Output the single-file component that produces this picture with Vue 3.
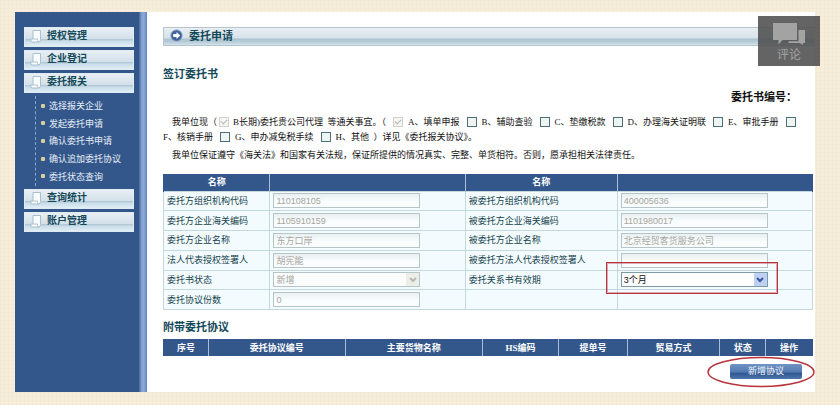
<script setup>
import { ref } from 'vue'

const menu = [
  { title: '授权管理', items: [] },
  { title: '企业登记', items: [] },
  { title: '委托报关', items: ['选择报关企业', '发起委托申请', '确认委托书申请', '确认追加委托协议', '委托状态查询'] },
  { title: '查询统计', items: [] },
  { title: '账户管理', items: [] },
]

const rows = [
  [
    { id: 'org-a', label: '委托方组织机构代码', value: '110108105' },
    { id: 'org-b', label: '被委托方组织机构代码', value: '400005636' },
  ],
  [
    { id: 'customs-a', label: '委托方企业海关编码', value: '1105910159' },
    { id: 'customs-b', label: '被委托方企业海关编码', value: '1101980017' },
  ],
  [
    { id: 'name-a', label: '委托方企业名称', value: '东方口岸' },
    { id: 'name-b', label: '被委托方企业名称', value: '北京经贸客货服务公司' },
  ],
  [
    { id: 'signer-a', label: '法人代表授权签署人', value: '胡宪能' },
    { id: 'signer-b', label: '被委托方法人代表授权签署人', value: '' },
  ],
  [
    { id: 'status', label: '委托书状态', value: '新增', select: true },
    { id: 'period', label: '委托关系书有效期', value: '3个月', select: true, active: true },
  ],
  [{ id: 'count', label: '委托协议份数', value: '0' }, null],
]

const columns = ['序号', '委托协议编号', '主要货物名称', 'HS编码', '提单号', '贸易方式', '状态', '操作']

const scopeTop = ref([
  { key: 'A', text: 'A、填单申报', checked: true, disabled: true },
  { key: 'B', text: 'B、辅助查验', checked: false },
  { key: 'C', text: 'C、垫缴税款', checked: false },
  { key: 'D', text: 'D、办理海关证明联', checked: false },
  { key: 'E', text: 'E、审批手册', checked: false },
])
const manual = ref(false)
const taxCut = ref(false)
const other = ref(false)
</script>

<template>
  <div class="page">
    <div class="panel">
      <nav class="side">
        <template v-for="group in menu" :key="group.title">
          <a class="group" href="#">
            <svg class="sheet" viewBox="0 0 12 13">
              <path d="M3 .5h7.500v9q0 2.500-2 2.500H2.500Q.8 12 .8 10V9H3z" fill="#f8fbfc" stroke="#a3bac8" stroke-width=".9" />
              <path d="M3 9h4.500v1.500q0 1.500 1.500 1.500" fill="none" stroke="#a3bac8" stroke-width=".8" />
            </svg>
            <span>{{ group.title }}</span>
          </a>
          <ul v-if="group.items.length" class="sub">
            <li v-for="item in group.items" :key="item"><a href="#">{{ item }}</a></li>
          </ul>
        </template>
      </nav>
      <div class="rail"></div>

      <main class="main">
        <div class="bar">
          <svg class="go" viewBox="0 0 14 14">
            <circle cx="7" cy="7" r="6" fill="#41659b" />
            <circle cx="7" cy="7" r="6" fill="none" stroke="#7d98bf" />
            <path d="M3.500 5.500H7V3.200L11 7l-4 3.800V8.500H3.500z" fill="#fff" />
          </svg>
          <span>委托申请</span>
        </div>

        <div class="body">
          <h1>签订委托书</h1>
          <p class="number">委托书编号：</p>

          <div class="terms">
            <p>
              <span class="lead">我单位现（</span><label><input class="tight" type="checkbox" checked disabled />B长期)委托贵公司代理</label>&nbsp; 等通关事宜。（<label
                v-for="s in scopeTop" :key="s.key"><input v-model="s.checked" type="checkbox" :disabled="s.disabled" />{{ s.text }}</label><label><input
                v-model="manual" type="checkbox" /><br />F、核销手册</label><label><input v-model="taxCut" type="checkbox" />G、申办减免税手续</label><label><input
                v-model="other" type="checkbox" />H、其他</label>&nbsp; ）详见《委托报关协议》。
            </p>
            <p class="pledge"><span class="lead">我单位保证遵守《海关法》和国家有关法规，保证所提供的情况真实、完整、单货相符。否则，愿承担相关法律责任。</span></p>
          </div>

          <table class="form">
            <thead>
              <tr>
                <th class="w-a">名称</th>
                <th class="w-b"></th>
                <th class="w-c">名称</th>
                <th class="w-d"></th>
              </tr>
            </thead>
            <tbody>
              <tr v-for="(row, i) in rows" :key="i">
                <template v-for="(f, j) in row" :key="j">
                  <td><label v-if="f" :for="f.id">{{ f.label }}</label></td>
                  <td>
                    <div v-if="f && f.select" class="pick" :class="{ active: f.active }">
                      <select :id="f.id" :disabled="!f.active"><option>{{ f.value }}</option></select>
                      <span class="arrow">
                        <svg viewBox="0 0 8 6"><path d="M1 1l3 3 3-3" fill="none" stroke="currentColor" stroke-width="2" /></svg>
                      </span>
                      <span v-if="f.active" class="mark"></span>
                    </div>
                    <input v-else-if="f" :id="f.id" class="text" type="text" :value="f.value" disabled />
                  </td>
                </template>
              </tr>
            </tbody>
          </table>

          <h2>附带委托协议</h2>
          <table class="list">
            <thead>
              <tr><th v-for="(c, i) in columns" :key="c" :class="'c' + i">{{ c }}</th></tr>
            </thead>
          </table>

          <div class="actions">
            <div class="add">
              <button type="button">新增协议</button>
              <svg class="ring" viewBox="0 0 108 32">
                <ellipse cx="54" cy="16" rx="53" ry="14.500" fill="none" stroke="#b8333b" stroke-width="1.400" />
              </svg>
            </div>
          </div>
        </div>
      </main>
    </div>

    <button class="comment" type="button">
      <svg viewBox="0 0 32 22">
        <path d="M0 0h24v17H9.500l-4 4.500V17H0z" fill="#a3a3a3" />
        <path d="M25.500 7H32v13h-2v2l-3-2H15.500v-1.700h10z" fill="#a3a3a3" />
      </svg>
      <span>评论</span>
    </button>
  </div>
</template>

<style>
body {
  margin: 0;
  background-color: #f6edda;
  background-image:
    repeating-linear-gradient(90deg, rgba(226, 212, 182, 0.12) 0 1px, transparent 1px 4px),
    repeating-linear-gradient(0deg, rgba(226, 212, 182, 0.12) 0 1px, transparent 1px 4px);
}
</style>

<style scoped>
* {
  box-sizing: border-box;
}
.page {
  position: relative;
  padding: 12px 25px 13px 15px;
  font-family: "Liberation Serif", "Noto Sans CJK SC", serif;
  font-size: 9px;
  color: #111;
}
.panel {
  display: flex;
  background: #fff;
}
a {
  color: inherit;
  text-decoration: none;
}
h1, h2, p, ul {
  margin: 0;
  padding: 0;
}

.side {
  display: flex;
  flex-direction: column;
  gap: 3px;
  width: 124px;
  padding: 15px 5px 15px 9px;
  background: #34578b;
}
.rail {
  width: 8px;
  background: linear-gradient(90deg, #42659c, #7f9dce 30%, #8ba8d9 60%, #6284bb);
}
.group {
  display: flex;
  align-items: center;
  gap: 5px;
  height: 20px;
  padding: 0 0 2px 5px;
  background: linear-gradient(#e8eff4, #d3e0e9 60%, #afc6d5 62%, #cbdee9 75%, #e0eef5);
  border: 1px solid #dfeaf2;
  color: #14495a;
  font-size: 10px;
  font-weight: bold;
  line-height: 14px;
}
.sheet {
  width: 12px;
  height: 13px;
}
.sub {
  display: flex;
  flex-direction: column;
  height: 90px;
  margin-left: 11px;
  padding: 1px 0;
  border-left: 1px dashed #8ba6cc;
  list-style: none;
  color: #e6eef8;
}
.sub li {
  display: flex;
  flex: 1;
  align-items: center;
  gap: 4px;
  padding-left: 5px;
  white-space: nowrap;
}
.sub li::before {
  content: "";
  width: 4px;
  height: 4px;
  border-radius: 1px;
  background: #d8cd9c;
}

.main {
  flex: 1;
  min-width: 0;
  padding: 15px 0 13px 16px;
}
.bar {
  display: flex;
  align-items: center;
  gap: 6px;
  height: 19px;
  padding: 0 0 2px 6px;
  border: 1px solid #b4c5d1;
  border-right: 0;
  background: linear-gradient(#e9eff3, #d6e1e8 60%, #abc3d0 64%, #b5cbd8 80%, #d3e2ea);
  color: #14495a;
  font-size: 11px;
  font-weight: bold;
  line-height: 14px;
}
.go {
  width: 13px;
  height: 13px;
}
.body {
  padding-right: 2px;
}
h1, h2 {
  color: #14495a;
  font-size: 11px;
  line-height: 16px;
  font-weight: bold;
}
h1 {
  margin-top: 20px;
}
h2 {
  margin-top: 9px;
}
.number {
  margin-top: 7px;
  padding-right: 16px;
  font-size: 11px;
  line-height: 16px;
  font-weight: bold;
  text-align: right;
}
.terms {
  margin-top: 10px;
  line-height: 15px;
}
.lead {
  padding-left: 9px;
}
.pledge {
  margin-top: 3px;
}
.terms input {
  appearance: none;
  width: 10px;
  height: 10px;
  margin: 0 5px 0 7px;
  border: 1px solid #4d7077;
  background: #eef4f1;
  vertical-align: -2px;
}
.terms input.tight {
  margin: 0 4px 0 2px;
}
.terms input:disabled {
  border-color: #cfd2cc;
  background: #f6f6f3;
}
.terms input:checked::after {
  content: "";
  display: block;
  width: 5px;
  height: 3px;
  margin: 1px;
  border: solid #b3b6b0;
  border-width: 0 0 1px 1px;
  transform: rotate(-45deg);
}

table {
  width: 100%;
  border-collapse: collapse;
  table-layout: fixed;
}
th {
  height: 17px;
  padding: 0;
  background: #34578b;
  color: #fff;
  font-weight: bold;
  line-height: 12px;
}
.form {
  height: 136px;
  margin-top: 11px;
  color: #14434d;
}
.form th, .list th {
  border: solid #a9bdd4;
  border-width: 0 1px;
}
.form th:first-child, .list th:first-child {
  border-left-color: #34578b;
}
.form th:last-child, .list th:last-child {
  border-right-color: #34578b;
}
.form td {
  padding: 0 3px;
  border: 1px solid #c3d9dd;
  background: #f4fbfe;
  line-height: 12px;
  white-space: nowrap;
}
.w-a { width: 16.4%; }
.w-b { width: 30.1%; }
.w-c { width: 23.4%; }
.w-d { width: 30.1%; }
.text, .pick {
  display: block;
  width: 78%;
  height: 15px;
}
.text, select {
  margin: 0;
  padding: 0 2px;
  border: 1px solid #b5c5c8;
  border-radius: 0;
  background: linear-gradient(#e9f0f2, #fafdfe 60%);
  color: #a5a59c;
  font-family: "Liberation Sans", "Noto Sans CJK SC", sans-serif;
  font-size: 9px;
  line-height: 12px;
}
.pick {
  position: relative;
}
select {
  appearance: none;
  display: block;
  width: 100%;
  height: 100%;
  background: #fbfdfd;
  opacity: 1;
}
.active select {
  border-color: #7d9aa6;
  background: #fff;
  color: #111;
}
.arrow {
  position: absolute;
  top: 1px;
  right: 1px;
  display: flex;
  align-items: center;
  justify-content: center;
  width: 13px;
  height: 13px;
  background: #eeeee8;
  color: #b9b9b2;
  pointer-events: none;
}
.active .arrow {
  background: #bfd0f5;
  color: #3a539b;
}
.arrow svg {
  width: 8px;
  height: 6px;
}
.mark {
  position: absolute;
  inset: -10px -10px -7px -15px;
  border: 1px solid #b8333b;
  outline: 1px solid rgba(184, 51, 59, 0.4);
  outline-offset: -2px;
  pointer-events: none;
}

.list {
  margin-top: 4px;
}
.c0 { width: 6.9%; }
.c1 { width: 21.1%; }
.c2 { width: 21.1%; }
.c3 { width: 11.8%; }
.c4 { width: 10.6%; }
.c5 { width: 14.2%; }
.c6 { width: 7.1%; }
.c7 { width: 7.2%; }
.actions {
  display: flex;
  justify-content: flex-end;
  margin-top: 8px;
  padding-right: 11px;
}
.add {
  position: relative;
  display: flex;
}
.add button {
  width: 72px;
  height: 15px;
  padding: 0;
  border: 0;
  border-radius: 2px;
  background: linear-gradient(#6f93c2, #5279b0 55%, #2f568f 60%, #4c76ad);
  color: #eef4fb;
  font-family: inherit;
  font-size: 9px;
  line-height: 15px;
}
.ring {
  position: absolute;
  top: -8px;
  left: -23px;
  width: 108px;
  height: 32px;
  pointer-events: none;
}

.comment {
  position: absolute;
  top: 16px;
  right: 20px;
  display: flex;
  flex-direction: column;
  align-items: center;
  gap: 1px;
  width: 62px;
  height: 50px;
  padding: 7px 0 0;
  border: 0;
  background: rgba(78, 78, 78, 0.88);
  color: #a3a3a3;
  font-family: "Noto Sans CJK SC", sans-serif;
  font-size: 12px;
  line-height: 16px;
}
.comment svg {
  width: 32px;
  height: 22px;
}
</style>
